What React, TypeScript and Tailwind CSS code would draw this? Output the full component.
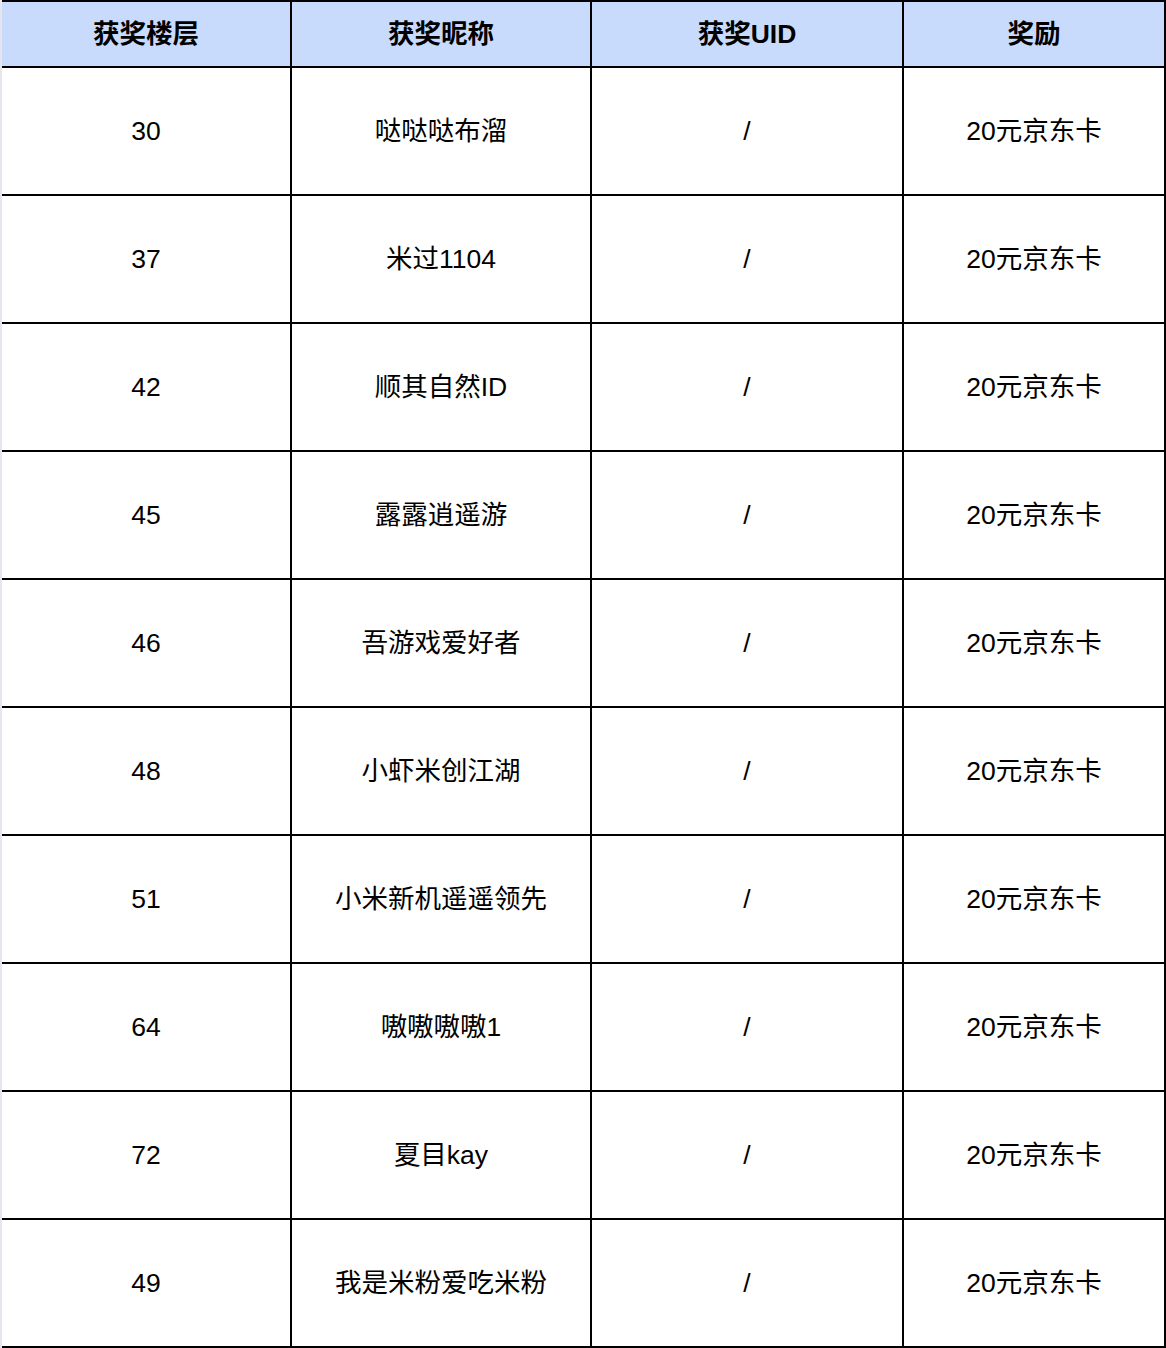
const headers = ["获奖楼层", "获奖昵称", "获奖UID", "奖励"];

const rows = [
	["30", "哒哒哒布溜"],
	["37", "米过1104"],
	["42", "顺其自然ID"],
	["45", "露露逍遥游"],
	["46", "吾游戏爱好者"],
	["48", "小虾米创江湖"],
	["51", "小米新机遥遥领先"],
	["64", "嗷嗷嗷嗷1"],
	["72", "夏目kay"],
	["49", "我是米粉爱吃米粉"],
];

const cols = "grid grid-cols-[290px_300px_312px_262px]";
const cell =
	"flex items-center justify-center pt-[2px] border-r-2 border-b-2 border-black";

export default function App() {
	return (
		<div
			className="w-[1166px] h-[1348px] bg-white border-l-2 border-[#e6e6ee] text-black text-[26.5px]"
			style={{
				fontFamily:
					'"Liberation Sans", Arial, "Noto Sans CJK SC", sans-serif',
			}}
		>
			<div className="border-t-2 border-black">
				<div className={`${cols} h-[66px] bg-[#c9dbfc] font-bold`}>
					{headers.map((h) => (
						<div key={h} className={cell}>
							{h}
						</div>
					))}
				</div>
				{rows.map(([floor, name]) => (
					<div key={floor + name} className={`${cols} h-[128px]`}>
						<div className={cell}>{floor}</div>
						<div className={cell}>{name}</div>
						<div className={cell}>/</div>
						<div className={cell}>20元京东卡</div>
					</div>
				))}
			</div>
		</div>
	);
}
